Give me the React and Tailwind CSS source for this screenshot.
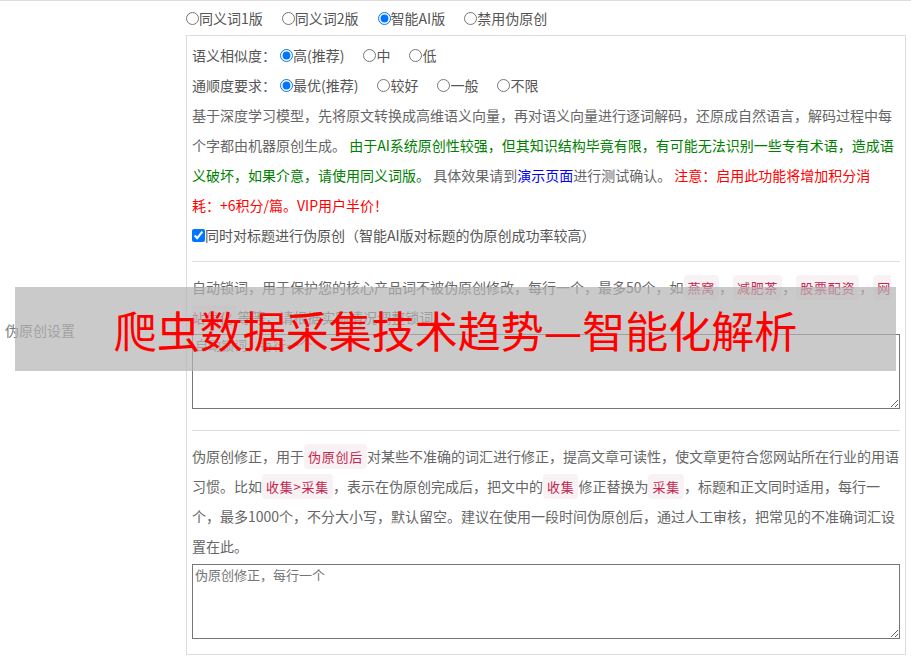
import React from 'react';

const font = { fontFamily: '"Microsoft YaHei", "Noto Sans CJK SC", "Noto Sans", sans-serif' };

const Tag = ({ children }) => (
  <span className="bg-[#f9f2f4] text-[#c7254e] text-[13px] leading-none tracking-[0.75px] px-[4px] py-[3px] rounded-[4px]">
    {children}
  </span>
);

const Radio = ({ name, label, checked, last }) => (
  <label className={`inline-flex items-center ${last ? '' : 'mr-[19px]'}`}>
    <input type="radio" name={name} defaultChecked={checked} className="w-[13px] h-[13px] m-0" />
    <span>{label}</span>
  </label>
);

const App = () => {
  return (
    <div className="relative bg-white text-[14px] text-[#666] min-h-[658px]" style={font}>
      <div className="flex border-t border-[#ddd]">
        <div className="w-[186px] shrink-0 flex items-center pl-[5px] text-[#777]">伪原创设置</div>

        <div className="flex-1 pr-[5px] pb-[4px]">
          <div className="h-[34px] flex items-center text-[#555]">
            <Radio name="mode" label="同义词1版" />
            <Radio name="mode" label="同义词2版" />
            <Radio name="mode" label="智能AI版" checked />
            <Radio name="mode" label="禁用伪原创" last />
          </div>

          <div className="border border-[#ddd] px-[5px] pt-[4px] pb-[15px] leading-[30px]">
            <div className="flex items-center h-[30px] text-[#555]">
              <span className="mr-[4px]">语义相似度：</span>
              <Radio name="sim" label="高(推荐)" checked />
              <Radio name="sim" label="中" />
              <Radio name="sim" label="低" last />
            </div>
            <div className="flex items-center h-[30px] text-[#555]">
              <span className="mr-[4px]">通顺度要求：</span>
              <Radio name="flu" label="最优(推荐)" checked />
              <Radio name="flu" label="较好" />
              <Radio name="flu" label="一般" />
              <Radio name="flu" label="不限" last />
            </div>

            <p>
              基于深度学习模型，先将原文转换成高维语义向量，再对语义向量进行逐词解码，还原成自然语言，解码过程中每<br />
              个字都由机器原创生成。{' '}
              <span className="text-[#008000]">由于AI系统原创性较强，但其知识结构毕竟有限，有可能无法识别一些专有术语，造成语<br />义破坏，如果介意，请使用同义词版。</span>{' '}
              具体效果请到<span className="text-[#0000ff]">演示页面</span>进行测试确认。{' '}
              <span className="text-[#ff0000]">注意：启用此功能将增加积分消<br />耗：+6积分/篇。VIP用户半价！</span>
            </p>

            <label className="flex items-center h-[30px] text-[#555]">
              <input type="checkbox" defaultChecked className="w-[13px] h-[13px] m-0" />
              <span>同时对标题进行伪原创（智能AI版对标题的伪原创成功率较高）</span>
            </label>

            <div className="mt-[11px] border-t border-[#ddd]" />

            <p className="mt-[10px]">
              自动锁词，用于保护您的核心产品词不被伪原创修改，每行一个，最多50个，如<Tag>燕窝</Tag>，<Tag>减肥茶</Tag>，<Tag>股票配资</Tag>，<Tag>网站优化</Tag>等等，请根据实际情况调整锁词。
            </p>
            <textarea
              className="block w-full h-[75px] mt-[2px] border border-[#767676] px-[2px] py-[1px] text-[13px] leading-[18px] placeholder:text-[#757575]"
              placeholder="自动锁词，每行一个"
            />

            <div className="mt-[21px] border-t border-[#ddd]" />

            <p className="mt-[10px]">
              伪原创修正，用于<Tag>伪原创后</Tag>对某些不准确的词汇进行修正，提高文章可读性，使文章更符合您网站所在行业的用语<br />
              习惯。比如<Tag>收集&gt;采集</Tag>，表示在伪原创完成后，把文中的<Tag>收集</Tag>修正替换为<Tag>采集</Tag>，标题和正文同时适用，每行一<br />
              个，最多1000个，不分大小写，默认留空。建议在使用一段时间伪原创后，通过人工审核，把常见的不准确词汇设<br />
              置在此。
            </p>
            <textarea
              className="block w-full h-[75px] mt-[3px] border border-[#767676] px-[2px] py-[1px] text-[13px] leading-[18px] placeholder:text-[#757575]"
              placeholder="伪原创修正，每行一个"
            />
          </div>
        </div>
      </div>

      <div className="absolute left-[15px] top-[287px] w-[881px] h-[84px] bg-[rgba(180,180,180,0.7)] flex items-center justify-center">
        <span className="text-[#ff0000] text-[43px] leading-none">爬虫数据采集技术趋势—智能化解析</span>
      </div>
    </div>
  );
};

export default App;
